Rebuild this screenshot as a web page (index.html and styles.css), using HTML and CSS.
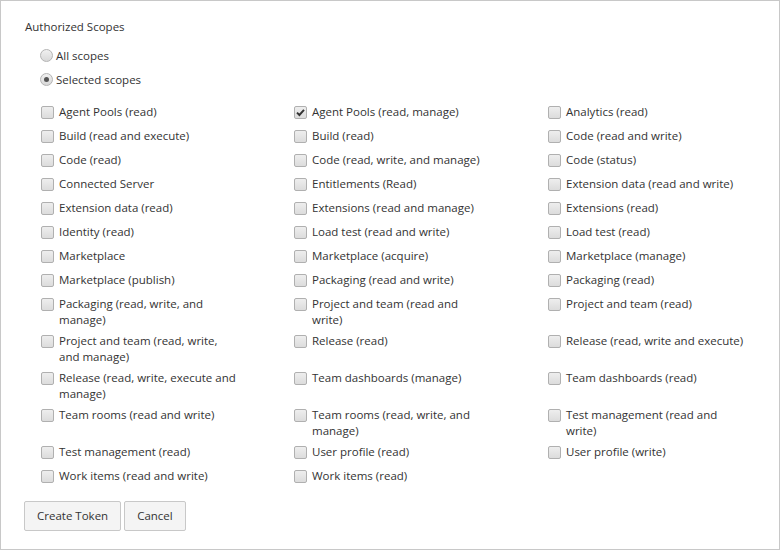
FILE: index.html
```html
<!DOCTYPE html>
<html lang="en">
<head>
<meta charset="utf-8">
<title>Authorized Scopes</title>
<link rel="stylesheet" href="styles.css">
</head>
<body>
<div class="frame">
  <div class="heading">Authorized Scopes</div>
  <div class="radios">
    <label class="radio-row"><span class="radio"></span><span>All scopes</span></label>
    <label class="radio-row"><span class="radio on"></span><span>Selected scopes</span></label>
  </div>
  <div class="scopes">
    <div class="item"><span class="cb"></span><span class="txt">Agent Pools (read)</span></div>
    <div class="item"><span class="cb on"><svg viewBox="0 0 13 13" width="13" height="13"><path d="M3 6.6 L5.4 9 L10 3.8" fill="none" stroke="#333" stroke-width="1.9"/></svg></span><span class="txt">Agent Pools (read, manage)</span></div>
    <div class="item"><span class="cb"></span><span class="txt">Analytics (read)</span></div>

    <div class="item"><span class="cb"></span><span class="txt">Build (read and execute)</span></div>
    <div class="item"><span class="cb"></span><span class="txt">Build (read)</span></div>
    <div class="item"><span class="cb"></span><span class="txt">Code (read and write)</span></div>

    <div class="item"><span class="cb"></span><span class="txt">Code (read)</span></div>
    <div class="item"><span class="cb"></span><span class="txt">Code (read, write, and manage)</span></div>
    <div class="item"><span class="cb"></span><span class="txt">Code (status)</span></div>

    <div class="item"><span class="cb"></span><span class="txt">Connected Server</span></div>
    <div class="item"><span class="cb"></span><span class="txt">Entitlements (Read)</span></div>
    <div class="item"><span class="cb"></span><span class="txt">Extension data (read and write)</span></div>

    <div class="item"><span class="cb"></span><span class="txt">Extension data (read)</span></div>
    <div class="item"><span class="cb"></span><span class="txt">Extensions (read and manage)</span></div>
    <div class="item"><span class="cb"></span><span class="txt">Extensions (read)</span></div>

    <div class="item"><span class="cb"></span><span class="txt">Identity (read)</span></div>
    <div class="item"><span class="cb"></span><span class="txt">Load test (read and write)</span></div>
    <div class="item"><span class="cb"></span><span class="txt">Load test (read)</span></div>

    <div class="item"><span class="cb"></span><span class="txt">Marketplace</span></div>
    <div class="item"><span class="cb"></span><span class="txt">Marketplace (acquire)</span></div>
    <div class="item"><span class="cb"></span><span class="txt">Marketplace (manage)</span></div>

    <div class="item"><span class="cb"></span><span class="txt">Marketplace (publish)</span></div>
    <div class="item"><span class="cb"></span><span class="txt">Packaging (read and write)</span></div>
    <div class="item"><span class="cb"></span><span class="txt">Packaging (read)</span></div>

    <div class="item"><span class="cb"></span><span class="txt">Packaging (read, write, and manage)</span></div>
    <div class="item"><span class="cb"></span><span class="txt">Project and team (read and write)</span></div>
    <div class="item"><span class="cb"></span><span class="txt">Project and team (read)</span></div>

    <div class="item"><span class="cb"></span><span class="txt">Project and team (read, write, and manage)</span></div>
    <div class="item"><span class="cb"></span><span class="txt">Release (read)</span></div>
    <div class="item"><span class="cb"></span><span class="txt">Release (read, write and execute)</span></div>

    <div class="item"><span class="cb"></span><span class="txt">Release (read, write, execute and manage)</span></div>
    <div class="item"><span class="cb"></span><span class="txt">Team dashboards (manage)</span></div>
    <div class="item"><span class="cb"></span><span class="txt">Team dashboards (read)</span></div>

    <div class="item"><span class="cb"></span><span class="txt">Team rooms (read and write)</span></div>
    <div class="item"><span class="cb"></span><span class="txt">Team rooms (read, write, and manage)</span></div>
    <div class="item"><span class="cb"></span><span class="txt">Test management (read and write)</span></div>

    <div class="item"><span class="cb"></span><span class="txt">Test management (read)</span></div>
    <div class="item"><span class="cb"></span><span class="txt">User profile (read)</span></div>
    <div class="item"><span class="cb"></span><span class="txt">User profile (write)</span></div>

    <div class="item"><span class="cb"></span><span class="txt">Work items (read and write)</span></div>
    <div class="item"><span class="cb"></span><span class="txt">Work items (read)</span></div>
  </div>
  <div class="actions">
    <button class="btn">Create Token</button>
    <button class="btn">Cancel</button>
  </div>
</div>
</body>
</html>
```

FILE: styles.css
```css
* { box-sizing: border-box; }
html, body { margin: 0; padding: 0; background: #fff; }
body {
  font-family: "Segoe UI", "Open Sans", "Noto Sans", sans-serif;
  font-size: 11.5px;
  line-height: 16px;
  color: #333;
}
.frame {
  width: 780px;
  height: 550px;
  border: 1px solid #c8c8c8;
  padding: 18px 0 0 24px;
}
.heading {
  height: 16px;
}
.radios {
  margin-top: 13px;
  padding-left: 15px;
  display: flex;
  flex-direction: column;
  gap: 8px;
}
.radio-row {
  display: flex;
  align-items: center;
  gap: 3px;
}
.radio {
  width: 13px;
  height: 13px;
  border-radius: 50%;
  border: 1px solid #b4b4b4;
  background: linear-gradient(#f0f0f0, #d8d8d8);
  display: inline-flex;
  align-items: center;
  justify-content: center;
  margin-top: -2px;
}
.radio.on::after {
  content: "";
  width: 5px;
  height: 5px;
  border-radius: 50%;
  background: #555;
}
.scopes {
  margin-top: 16px;
  padding-left: 16px;
  display: grid;
  grid-template-columns: 253px 254px 1fr;
  row-gap: 5px;
}
.item {
  display: flex;
  align-items: flex-start;
  min-height: 19px;
}
.cb {
  flex: none;
  width: 13px;
  height: 13px;
  margin-top: 2px;
  margin-right: 5px;
  border: 1px solid #b0b0b0;
  border-radius: 2px;
  background: linear-gradient(#eeeeee, #dcdcdc);
  display: inline-flex;
}
.cb svg { margin: -1px; }
.txt {
  max-width: 177px;
}
.item:nth-child(3n) .txt {
  max-width: 181px;
}
.actions {
  margin-top: 14px;
  margin-left: -1px;
  display: flex;
  gap: 3px;
}
.btn {
  font: inherit;
  color: #333;
  height: 30px;
  padding: 0 12px;
  background: #f4f4f4;
  border: 1px solid #c8c8c8;
  border-radius: 2px;
}
```
